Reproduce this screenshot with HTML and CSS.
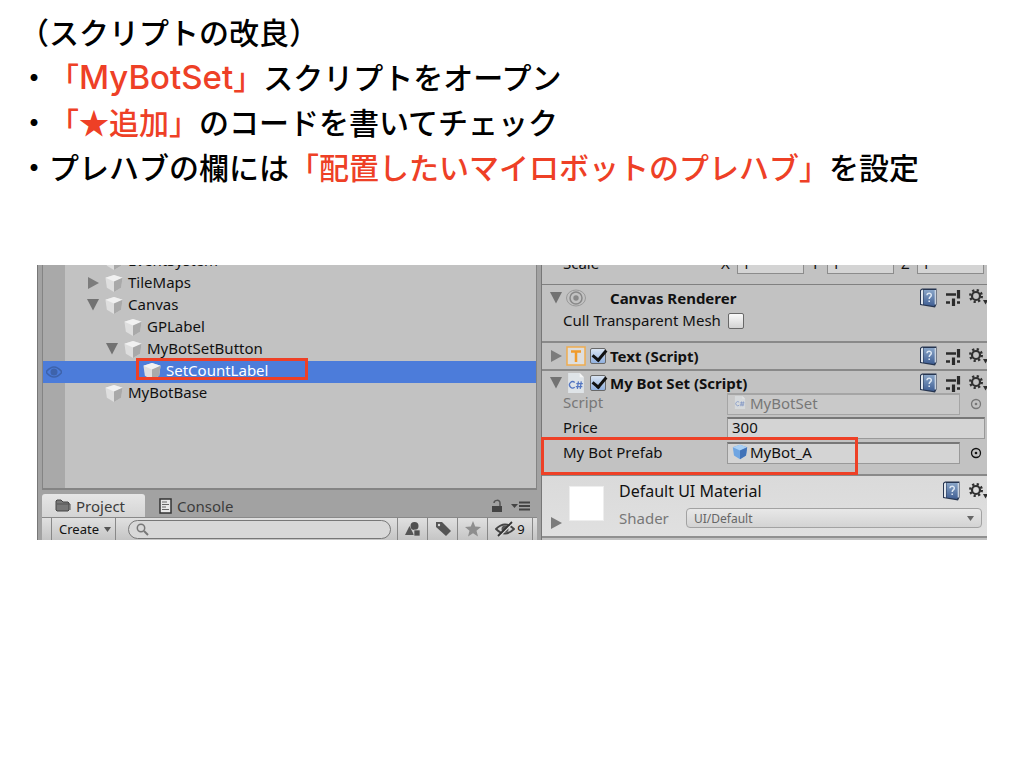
FILE: index.html
```html
<!DOCTYPE html>
<html lang="ja">
<head>
<meta charset="utf-8">
<title>スクリプトの改良</title>
<link rel="stylesheet" href="styles.css">
</head>
<body>
<svg class="defs" aria-hidden="true">
  <defs>
    <linearGradient id="bookfill" x1="0" y1="0" x2="0" y2="1"><stop offset="0" stop-color="#89a5c8"/><stop offset="1" stop-color="#405f94"/></linearGradient>
    <symbol id="cube" viewBox="0 0 20 20"><path d="M10 1 19 4 17.500 14.500 10 19 2.500 14.500 1 4Z" fill="#dedede"/><path d="M10 1 19 4 10 8 1 4Z" fill="#f1f1f1"/><path d="M19 4 10 8V19L17.500 14.500Z" fill="#a9a9a9"/></symbol>
    <symbol id="bluecube" viewBox="0 0 20 20"><path d="M10 1 19 4 17.500 14.500 10 19 2.500 14.500 1 4Z" fill="#6fa5e2"/><path d="M10 1 19 4 10 8 1 4Z" fill="#a9d0f5"/><path d="M19 4 10 8V19L17.500 14.500Z" fill="#4273b8"/></symbol>
    <symbol id="down" viewBox="0 0 12 12"><path d="M0 0H12L6 11.500Z" fill="#727272"/></symbol>
    <symbol id="right" viewBox="0 0 12 12"><path d="M1 0 12 6 1 12Z" fill="#7c7c7c"/></symbol>
    <symbol id="book" viewBox="0 0 18 20"><path d="M1 2 3 .5H17.500V16.500L16 19.500 1 17Z" fill="#263550"/><path d="M2 2.500 4 1.500V16.500L2 16Z" fill="#e3e8ee"/><path d="M4.500 2H16.500V15.500L15 18 4.500 16.500Z" fill="url(#bookfill)"/><path d="M16.300 2V16.500" stroke="#d8e0ea" stroke-width="1.200"/><path d="M8 7.200C8 4.300 12.500 4.600 12.300 7.200 12.200 9 10.200 8.900 10.200 11M10.200 12.500V14" fill="none" stroke="#dce6f2" stroke-width="1.500"/></symbol>
    <symbol id="sliders" viewBox="0 0 15 17"><path d="M0 5.500H10M0 13.500H4M11 13.500H14" stroke="#2b2b2b" stroke-width="2.500"/><path d="M12.500 1V9.500M7.500 9.500V17" stroke="#2b2b2b" stroke-width="3.200"/></symbol>
    <symbol id="gear" viewBox="0 0 18 17"><circle cx="7" cy="7" r="4" fill="none" stroke="#303030" stroke-width="2.200"/><circle cx="7" cy="7" r="5.800" fill="none" stroke="#303030" stroke-width="2.400" stroke-dasharray="2.200 2.350"/><path d="M14 11H18V13L16.500 15.500Z" fill="#303030"/></symbol>
    <symbol id="picker" viewBox="0 0 12 12"><circle cx="6" cy="6" r="4.500" fill="none" stroke="currentColor" stroke-width="1.300"/><circle cx="6" cy="6" r="1.300" fill="currentColor"/></symbol>
    <symbol id="csharp" viewBox="0 0 15 19"><path d="M0 0H11L15 4V19H0Z" fill="#dfe4e8"/><path d="M11 0V4H15Z" fill="#f6f6f6"/><path d="M6.300 9A3 3 0 1 0 6.300 13.500M9.800 8 8.800 15M12.500 8 11.500 15M7.800 10H14M7.300 13H13.500" fill="none" stroke="#5577c2" stroke-width="1.200"/></symbol>
  </defs>
</svg>

<header class="notes">
  <p>（スクリプトの改良）</p>
  <p>・<em>「<span class="latin">MyBotSet</span>」</em>スクリプトをオープン</p>
  <p>・<em>「★追加」</em>のコードを書いてチェック</p>
  <p>・プレハブの欄には<em>「配置したいマイロボットのプレハブ」</em>を設定</p>
</header>

<main class="editor">
  <section class="left">
    <div class="hierarchy">
      <ul class="tree">
        <li class="row lv1 clipped"><span class="fold"></span><svg class="cube"><use href="#cube"/></svg>EventSystem</li>
        <li class="row lv1"><svg class="fold"><use href="#right"/></svg><svg class="cube"><use href="#cube"/></svg>TileMaps</li>
        <li class="row lv1"><svg class="fold"><use href="#down"/></svg><svg class="cube"><use href="#cube"/></svg>Canvas</li>
        <li class="row lv2"><span class="fold"></span><svg class="cube"><use href="#cube"/></svg>GPLabel</li>
        <li class="row lv2"><svg class="fold"><use href="#down"/></svg><svg class="cube"><use href="#cube"/></svg>MyBotSetButton</li>
        <li class="row lv3 selected">
          <svg class="eye" viewBox="0 0 16 12"><path d="M0 6Q8-4 16 6 8 16 0 6Z" fill="none" stroke="#3e63ab" stroke-width="1.500"/><circle cx="8" cy="6" r="3.500" fill="#3e63ab"/></svg>
          <span class="fold"></span><svg class="cube"><use href="#cube"/></svg>SetCountLabel
          <span class="mark mark-row"></span>
        </li>
        <li class="row lv1"><span class="fold"></span><svg class="cube"><use href="#cube"/></svg>MyBotBase</li>
      </ul>
    </div>
    <nav class="tabs">
      <button class="tab active"><svg width="16" height="13" viewBox="0 0 16 13"><path d="M1 11V2L2 1H6L8 3H13L14 4V11L13 12H2Z" fill="#777" stroke="#444"/><path d="M2 5H15V11" fill="none" stroke="#555"/></svg>Project</button>
      <button class="tab"><svg width="13" height="16" viewBox="0 0 13 16"><path d="M1 1H12V15H1Z" fill="#e8e8e8" stroke="#333" stroke-width="1.500"/><path d="M3 4H8M3 6.500H10M3 9H7M3 11.500H10" stroke="#666"/></svg>Console</button>
      <span class="tab-tools">
        <svg width="12" height="14" viewBox="0 0 12 14"><path d="M1 7H11V13H1Z" fill="#444"/><path d="M3 4C3 1 9 0 9 4V7" fill="none" stroke="#555" stroke-width="1.500"/></svg>
        <svg width="20" height="10" viewBox="0 0 20 10"><path d="M0 3H7L3.500 7Z" fill="#444"/><path d="M8 1.500H19M8 5H19M8 8.500H19" stroke="#444" stroke-width="1.800"/></svg>
      </span>
    </nav>
    <div class="toolbar">
      <button class="create">Create <svg width="7" height="5" viewBox="0 0 7 5"><path d="M0 0H7L3.500 5Z" fill="#555"/></svg></button>
      <label class="search"><svg width="13" height="13" viewBox="0 0 13 13"><circle cx="5" cy="5" r="3.700" fill="none" stroke="#777" stroke-width="1.500"/><path d="M8 8 12 12" stroke="#777" stroke-width="2"/></svg><input type="text" aria-label="Search"></label>
      <button class="tool" aria-label="Filter by type"><svg width="16" height="16" viewBox="0 0 16 16"><path d="M0 14 4.500 5 9 14Z" fill="#555"/><circle cx="9.500" cy="5" r="4" fill="#505050"/><path d="M9 9H15V15H9Z" fill="#505050" stroke="#ccc" stroke-width=".7"/></svg></button>
      <button class="tool" aria-label="Filter by label"><svg width="16" height="16" viewBox="0 0 16 16"><path d="M1 1H7L16 10 11 15 1 6Z" fill="#555"/><circle cx="4" cy="4" r="1.200" fill="#ddd"/></svg></button>
      <button class="tool" aria-label="Favorite"><svg width="16" height="16" viewBox="0 0 16 16"><path d="M8 0 10.200 5.500 16 6 11.500 9.700 13 15.500 8 12.300 3 15.500 4.500 9.700 0 6 5.800 5.500Z" fill="#8e8e8e"/></svg></button>
      <button class="tool hidden-count"><svg width="20" height="16" viewBox="0 0 20 16"><path d="M1 8Q10-1 19 8 10 17 1 8Z" fill="none" stroke="#444" stroke-width="1.800"/><circle cx="10" cy="8" r="3.500" fill="#555"/><path d="M4.500 15.500 18 2" stroke="#ddd" stroke-width="1.500"/><path d="M3 15 17 1" stroke="#333" stroke-width="1.800"/></svg>9</button>
    </div>
  </section>

  <section class="inspector">
    <div class="scale">
      <span class="prop">Scale</span>
      <label>X<input value="1"></label><label>Y<input value="1"></label><label>Z<input value="1"></label>
    </div>
    <div class="component renderer">
      <h2 class="head"><svg class="fold"><use href="#down"/></svg><svg class="icon" viewBox="0 0 20 20"><ellipse cx="10" cy="10" rx="9.500" ry="8" fill="none" stroke="#999"/><circle cx="10" cy="10" r="6" fill="none" stroke="#888" stroke-width="1.500"/><circle cx="10" cy="10" r="2.700" fill="#888"/></svg><span class="check-gap"></span><span class="name">Canvas Renderer</span><span class="actions"><svg class="book"><use href="#book"/></svg><svg class="sliders"><use href="#sliders"/></svg><svg class="gear"><use href="#gear"/></svg></span></h2>
      <div class="field"><label class="cull" for="cull">Cull Transparent Mesh</label><input id="cull" class="check" type="checkbox"></div>
    </div>
    <div class="component">
      <h2 class="head"><svg class="fold"><use href="#right"/></svg><svg class="icon" viewBox="0 0 20 20"><path d="M1 1H19V19H1Z" fill="#dedede" stroke="#efad50" stroke-width="1.500"/><path d="M5 5.500H15M10 5.500V16" stroke="#f09b2b" stroke-width="2.500"/></svg><input class="check" type="checkbox" checked aria-label="Text enabled"><span class="name">Text (Script)</span><span class="actions"><svg class="book"><use href="#book"/></svg><svg class="sliders"><use href="#sliders"/></svg><svg class="gear"><use href="#gear"/></svg></span></h2>
    </div>
    <div class="component botset">
      <h2 class="head"><svg class="fold"><use href="#down"/></svg><svg class="icon"><use href="#csharp"/></svg><input class="check" type="checkbox" checked aria-label="My Bot Set enabled"><span class="name">My Bot Set (Script)</span><span class="actions"><svg class="book"><use href="#book"/></svg><svg class="sliders"><use href="#sliders"/></svg><svg class="gear"><use href="#gear"/></svg></span></h2>
      <div class="field muted"><span class="prop">Script</span><span class="box"><svg class="small"><use href="#csharp"/></svg>MyBotSet</span><svg class="picker"><use href="#picker"/></svg></div>
      <div class="field"><label class="prop" for="price">Price</label><input id="price" class="box" value="300"></div>
      <div class="field prefab"><span class="prop">My Bot Prefab</span><span class="box"><svg class="small"><use href="#bluecube"/></svg>MyBot_A</span><svg class="picker"><use href="#picker"/></svg><span class="mark mark-prefab"></span></div>
    </div>
    <div class="material">
      <svg class="fold"><use href="#right"/></svg>
      <span class="swatch"></span>
      <div class="material-body">
        <div class="material-title">Default UI Material<span class="actions"><svg class="book"><use href="#book"/></svg><svg class="gear"><use href="#gear"/></svg></span></div>
        <div class="shader"><label for="shader">Shader</label><span class="select"><select id="shader"><option>UI/Default</option></select><svg width="7" height="5" viewBox="0 0 7 5"><path d="M0 0H7L3.500 5Z" fill="#666"/></svg></span></div>
      </div>
    </div>
  </section>
</main>
</body>
</html>
```
FILE: styles.css
```css
* { box-sizing: border-box; }
body { margin: 0; background: #fff; color: #111; font-family: "Noto Sans", "Open Sans", sans-serif; font-size: 15px; }
svg { display: block; flex: none; }
.defs { position: absolute; width: 0; height: 0; }
button, input, select { font: inherit; color: inherit; margin: 0; padding: 0; }
button { border: 0; background: none; }

.notes { padding: 9px 19px 0; font-family: "Noto Sans CJK JP", sans-serif; font-size: 30px; font-weight: 500; line-height: 45px; color: #000; text-spacing-trim: space-all; }
.notes p { margin: 0; }
.notes em { font-style: normal; color: #ee4026; }
.latin { font-family: Inter, sans-serif; font-size: 33px; line-height: 1; }

.editor { display: flex; height: 275px; margin: 76px 37px 0; overflow: hidden; background: #a2a2a2; }
.left { flex: 495 1 0; display: flex; flex-direction: column; min-width: 0; padding-left: 4px; border-left: 1px solid #777; }
.hierarchy { flex: none; height: 225px; overflow: hidden; border: 1px solid #848484; border-width: 0 1px 2px; background: linear-gradient(90deg, #a9a9a9 22px, #c2c2c2 22px); }
.tree { list-style: none; margin: 0; padding: 0; }
.row { position: relative; display: flex; align-items: center; height: 22px; padding-bottom: 3px; line-height: 19px; white-space: nowrap; }
.clipped { margin-top: -14px; }
.lv1 { padding-left: 44px; }
.lv2 { padding-left: 63px; }
.lv3 { padding-left: 82px; }
.fold { width: 12px; height: 12px; flex: none; }
.cube { width: 20px; height: 19px; margin: 2px 4px 0 5px; }
.selected { background: #4c7cda; color: #fff; }
.eye { position: absolute; left: 3px; top: 5px; width: 16px; height: 12px; }
.mark { position: absolute; border: 3px solid #ee4026; pointer-events: none; }
.mark-row { left: 93px; top: -3px; width: 172px; height: 22px; }

.tabs { flex: none; display: flex; align-items: center; height: 27px; padding-top: 4px; color: #3c3c3c; }
.tab { display: flex; align-items: center; height: 23px; gap: 5px; padding: 0 20px 0 13px; }
.tab + .tab { padding-left: 14px; }
.tab.active { background: linear-gradient(#e6e6e6, #d4d4d4); border-radius: 3px 3px 0 0; }
.tab-tools { display: flex; align-items: center; gap: 8px; margin-left: auto; padding-right: 6px; }
.toolbar { flex: 1; display: flex; align-items: center; padding-left: 9px; background: linear-gradient(#e0e0e0, #c5c5c5); border-top: 1px solid #898989; border-bottom: 1px solid #888; font-size: 13px; }
.create { display: flex; align-items: center; gap: 5px; height: 22px; padding: 0 4px 0 7px; border: 1px solid #888; border-width: 0 1px; }
.search { flex: 1; display: flex; align-items: center; height: 19px; margin: 0 6px 0 12px; padding-left: 7px; border: 1px solid #777; border-radius: 10px; background: #d8d8d8; }
.search input { flex: 1; min-width: 0; height: 16px; border: 0; outline: 0; background: none; }
.tool { display: flex; align-items: center; justify-content: center; gap: 2px; width: 30px; height: 22px; border-left: 1px solid #888; }
.hidden-count { width: 46px; margin-right: 4px; border-right: 1px solid #888; }

.inspector { flex: 445 1 0; min-width: 0; margin-left: 4px; border-left: 1px solid #777; background: #c2c2c2; }
.prop { width: 164px; flex: none; }
.scale { display: flex; height: 20px; padding-left: 21px; border-bottom: 1px solid #808080; }
.scale .prop { width: 158px; margin-top: -13px; line-height: 22px; }
.scale label { flex: 1; display: flex; gap: 7px; height: 22px; margin: -13px 0 0; padding-right: 3px; line-height: 22px; }
.scale label + label { padding-left: 4px; }
.scale input { flex: 1; min-width: 0; width: 0; height: 22px; padding-left: 4px; border: 1px solid #8c8c8c; background: #d4d4d4; }
.component { border-bottom: 2px solid #898989; }
.head { display: flex; align-items: center; height: 26px; margin: 0; padding: 0 0 0 8px; font-size: 15px; font-weight: 700; line-height: 22px; }
.icon { width: 20px; height: 20px; margin: 0 4px; }
.check { appearance: none; flex: none; width: 16px; height: 16px; margin: 0; border: 1px solid #686868; border-radius: 2px; background: linear-gradient(#fafafa, #d3d3d3); }
.head .check, .check-gap { width: 16px; margin-right: 4px; }
.head .check { display: grid; place-items: center; background: linear-gradient(#d9e4f2, #90b0df); }
.head .check::after { content: ""; width: 6px; height: 11px; border: solid #111; border-width: 0 3px 3px 0; transform: translate(1px, -2px) rotate(40deg); }
.name { flex: 1; white-space: nowrap; }
.actions { display: flex; align-items: center; margin-left: auto; }
.book { width: 18px; height: 20px; }
.sliders { width: 15px; height: 17px; margin: 0 8px 0 9px; }
.gear { width: 18px; height: 17px; }
.renderer { height: 58px; }
.renderer .head { height: 25px; }
.cull { width: 165px; padding-bottom: 2px; }
.field { position: relative; display: flex; align-items: center; height: 22px; padding: 0 2px 0 21px; line-height: 18px; }
.botset { height: 105px; }
.botset .field { height: 22px; margin-bottom: 3px; }
.botset .prop { padding-bottom: 3px; }
.botset .head { height: 22px; padding-top: 2px; }
.botset .muted { height: 21px; color: #777; }
.box { flex: 1; min-width: 0; display: flex; align-items: center; height: 22px; padding: 0 4px 3px; border: 1px solid #999; border-top: 2px solid #777; background: #d4d4d4; }
.muted .box { border-color: #a5a5a5; background: #c9c9c9; }
.small { width: 16px; height: 16px; margin-right: 2px; }
.muted .small { height: 13px; opacity: .6; }
.picker { width: 12px; height: 12px; margin: 0 3px 0 10px; }
.mark-prefab { left: -1px; top: -5px; width: 317px; height: 38px; }
.material { display: flex; height: 62px; background: linear-gradient(#dadada, #e0e0e0); border-bottom: 2px solid #909090; padding-left: 8px; }
.material .fold { margin-top: 41px; }
.swatch { width: 35px; height: 35px; margin: 10px 15px 0 7px; background: #fff; border: 1px solid #eee; }
.material-body { flex: 1; min-width: 0; padding-top: 3px; }
.material-title { display: flex; align-items: center; height: 26px; padding-bottom: 2px; font-size: 16px; }
.material-title .gear { margin-left: 9px; }
.shader { display: flex; align-items: center; height: 26px; padding-right: 5px; color: #777; }
.shader label { width: 67px; flex: none; }
.select { position: relative; flex: 1; display: flex; }
.select select { appearance: none; width: 100%; height: 20px; padding: 0 7px; border: 1px solid #a2a2a2; border-radius: 4px; background: linear-gradient(#e8e8e8, #d3d3d3); font-size: 12px; color: #666; }
.select svg { position: absolute; right: 8px; top: 8px; }
```
